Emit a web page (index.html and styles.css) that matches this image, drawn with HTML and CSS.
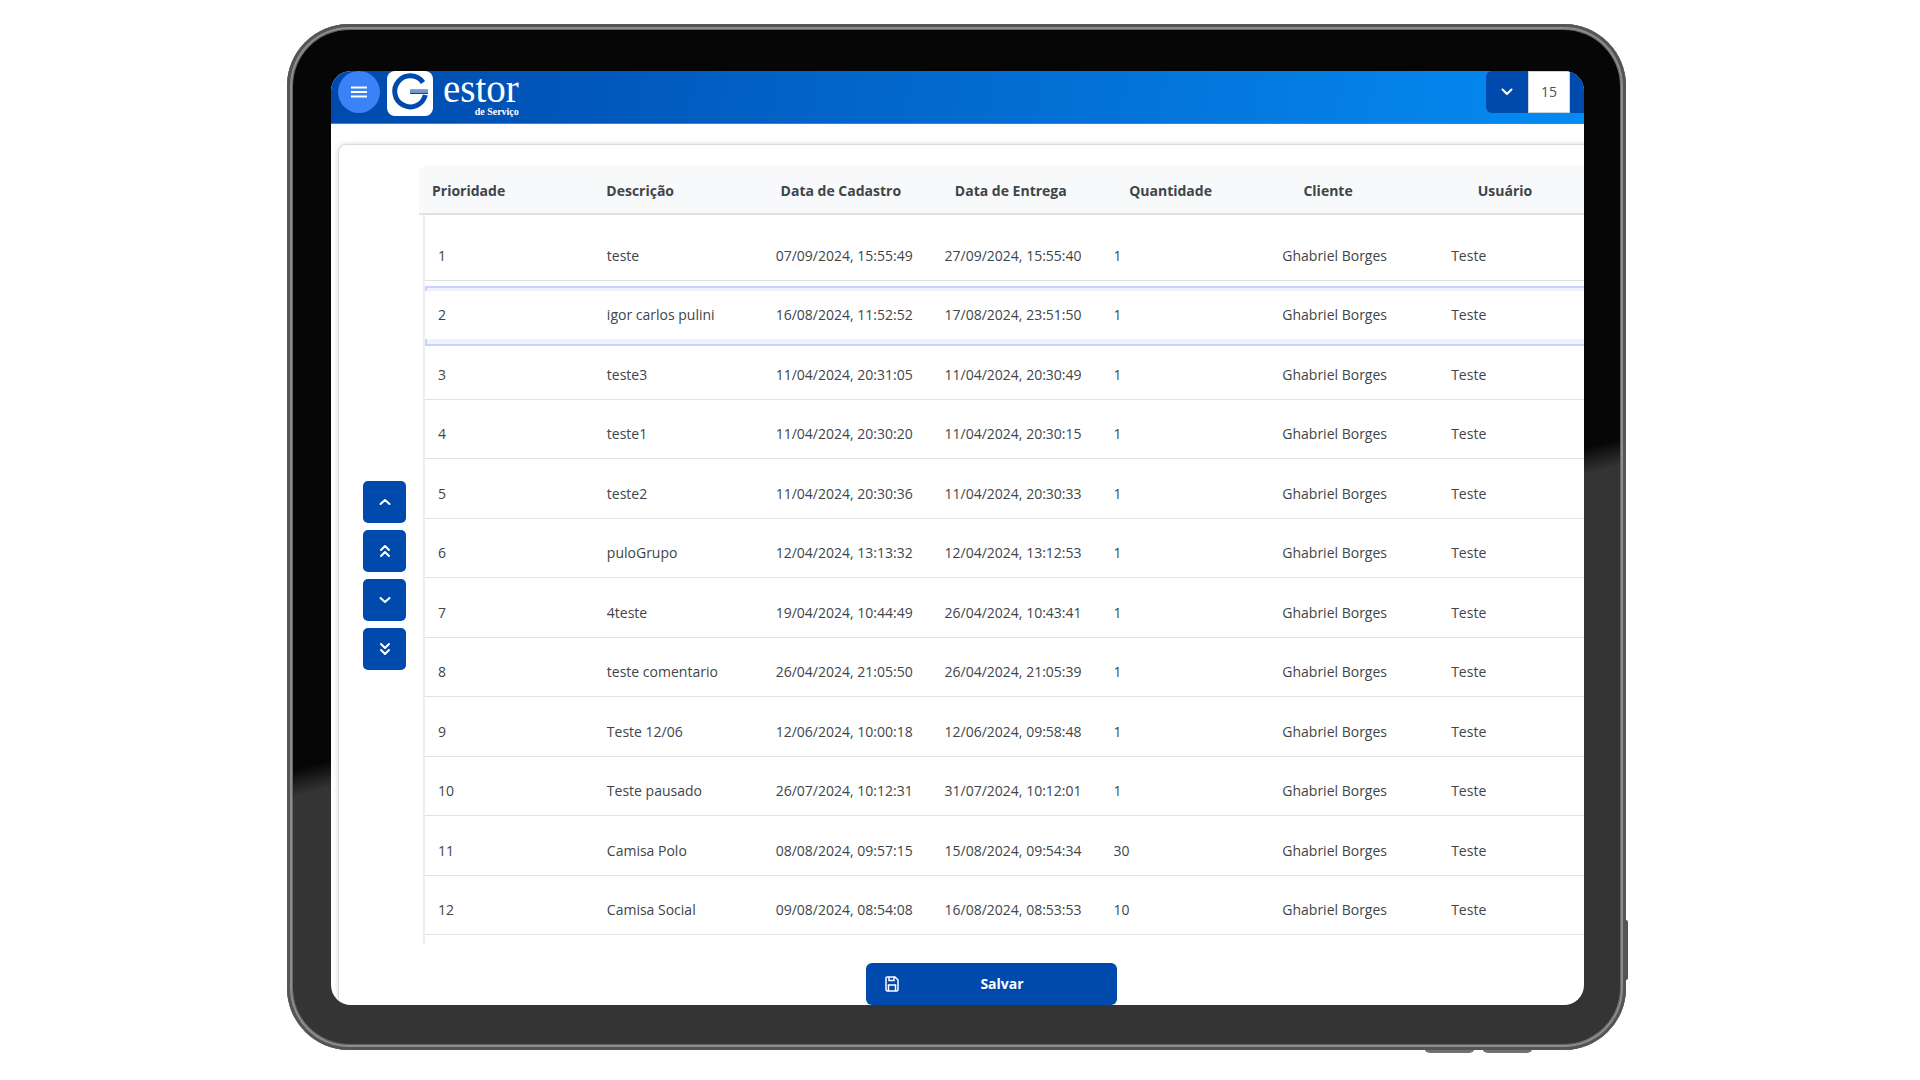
FILE: index.html
```html
<!DOCTYPE html>
<html lang="pt-BR">
<head>
<meta charset="utf-8">
<meta name="viewport" content="width=device-width, initial-scale=1">
<title>Gestor de Serviço</title>
<link rel="stylesheet" href="styles.css">
</head>
<body>
<div class="tablet">
  <span class="key key-side"></span>
  <span class="key key-bottom-a"></span>
  <span class="key key-bottom-b"></span>
  <div class="bezel">
    <div class="screen">
      <header class="topbar">
        <button class="menu" type="button" aria-label="Menu">
          <svg width="16" height="12" viewBox="0 0 16 12"><path d="M0 1.500h16M0 6h16M0 10.500h16" stroke="#fff" stroke-width="1.800"/></svg>
        </button>
        <a class="brand" href="#">
          <span class="mark">
            <svg width="46" height="45" viewBox="0 0 46 45" fill="none"><path d="M36 11.500A15.500 15.500 0 1 0 38.300 24" stroke="#004aad" stroke-width="5"/><path d="M23 19h18M23 22.500h18" stroke="#004aad" stroke-width="1"/><path d="M23 20.800h18" stroke="#6d97d0" stroke-width="2.500"/></svg>
          </span>
          <span class="wordmark">
            <span class="name">estor</span>
            <span class="tagline">de Serviço</span>
          </span>
        </a>
        <div class="stepper">
          <button class="step step-down" type="button" aria-label="Diminuir">
            <svg width="12" height="8" viewBox="0 0 12 8" fill="none"><path d="M1.500 1.500 6 6l4.500-4.500" stroke="#fff" stroke-width="2" stroke-linecap="round" stroke-linejoin="round"/></svg>
          </button>
          <input class="count" type="text" value="15" aria-label="Quantidade de itens">
          <button class="step" type="button" aria-label="Aumentar"></button>
        </div>
      </header>
      <main class="card">
        <div class="order">
          <div class="moves">
            <button class="move" type="button" aria-label="Subir"><svg width="12" height="8" viewBox="0 0 12 8" fill="none"><path d="M1.500 6 6 2l4.500 4"/></svg></button>
            <button class="move" type="button" aria-label="Mover para o topo"><svg width="12" height="14" viewBox="0 0 12 14" fill="none"><path d="M2 6l4-4 4 4M2 12l4-4 4 4"/></svg></button>
            <button class="move" type="button" aria-label="Descer"><svg width="12" height="8" viewBox="0 0 12 8" fill="none"><path d="M1.500 2 6 6l4.500-4"/></svg></button>
            <button class="move" type="button" aria-label="Mover para o fim"><svg width="12" height="14" viewBox="0 0 12 14" fill="none"><path d="M2 2l4 4 4-4M2 8l4 4 4-4"/></svg></button>
          </div>
          <table class="jobs">
            <thead>
              <tr><th>Prioridade</th><th>Descrição</th><th>Data de Cadastro</th><th>Data de Entrega</th><th>Quantidade</th><th>Cliente</th><th>Usuário</th></tr>
            </thead>
            <tbody>
              <tr><td>1</td><td>teste</td><td>07/09/2024, 15:55:49</td><td>27/09/2024, 15:55:40</td><td>1</td><td>Ghabriel Borges</td><td>Teste</td></tr>
              <tr class="focused"><td>2</td><td>igor carlos pulini</td><td>16/08/2024, 11:52:52</td><td>17/08/2024, 23:51:50</td><td>1</td><td>Ghabriel Borges</td><td>Teste</td></tr>
              <tr><td>3</td><td>teste3</td><td>11/04/2024, 20:31:05</td><td>11/04/2024, 20:30:49</td><td>1</td><td>Ghabriel Borges</td><td>Teste</td></tr>
              <tr><td>4</td><td>teste1</td><td>11/04/2024, 20:30:20</td><td>11/04/2024, 20:30:15</td><td>1</td><td>Ghabriel Borges</td><td>Teste</td></tr>
              <tr><td>5</td><td>teste2</td><td>11/04/2024, 20:30:36</td><td>11/04/2024, 20:30:33</td><td>1</td><td>Ghabriel Borges</td><td>Teste</td></tr>
              <tr><td>6</td><td>puloGrupo</td><td>12/04/2024, 13:13:32</td><td>12/04/2024, 13:12:53</td><td>1</td><td>Ghabriel Borges</td><td>Teste</td></tr>
              <tr><td>7</td><td>4teste</td><td>19/04/2024, 10:44:49</td><td>26/04/2024, 10:43:41</td><td>1</td><td>Ghabriel Borges</td><td>Teste</td></tr>
              <tr><td>8</td><td>teste comentario</td><td>26/04/2024, 21:05:50</td><td>26/04/2024, 21:05:39</td><td>1</td><td>Ghabriel Borges</td><td>Teste</td></tr>
              <tr><td>9</td><td>Teste 12/06</td><td>12/06/2024, 10:00:18</td><td>12/06/2024, 09:58:48</td><td>1</td><td>Ghabriel Borges</td><td>Teste</td></tr>
              <tr><td>10</td><td>Teste pausado</td><td>26/07/2024, 10:12:31</td><td>31/07/2024, 10:12:01</td><td>1</td><td>Ghabriel Borges</td><td>Teste</td></tr>
              <tr><td>11</td><td>Camisa Polo</td><td>08/08/2024, 09:57:15</td><td>15/08/2024, 09:54:34</td><td>30</td><td>Ghabriel Borges</td><td>Teste</td></tr>
              <tr><td>12</td><td>Camisa Social</td><td>09/08/2024, 08:54:08</td><td>16/08/2024, 08:53:53</td><td>10</td><td>Ghabriel Borges</td><td>Teste</td></tr>
            </tbody>
          </table>
        </div>
        <button class="save" type="button">
          <svg width="14" height="16" viewBox="0 0 14 16" fill="none" stroke="#fff" stroke-width="1.500"><path d="M2 1h8l3 3v9.500a1.500 1.500 0 0 1-1.500 1.500h-9A1.500 1.500 0 0 1 1 13.500V2a1 1 0 0 1 1-1zM4 1v3.500h5V1M3.500 15V9h7v6"/></svg>
          <span class="save-label">Salvar</span>
        </button>
      </main>
    </div>
  </div>
</div>
</body>
</html>
```
FILE: styles.css
```css
*, *::before, *::after { box-sizing: border-box; }

:root {
  --blue: #004aad;
  --text: #495057;
  --line: #dfe3e8;
}

body {
  margin: 0;
  padding: 24px 294px 30px 287px;
  background: #fff;
  color: #404549;
  font-family: "Open Sans", "Noto Sans", sans-serif;
  font-size: 14px;
  line-height: 20px;
}

button { border: 0; padding: 0; font: inherit; cursor: pointer; }
svg { display: block; }

/* Device */
.tablet {
  position: relative;
  padding: 6px;
  border-radius: 62px;
  background: #8a8a8a;
  box-shadow: inset 0 0 0 3px #555, inset 0 0 0 5px #8c8c8c, inset 0 0 0 6px #666;
}
.bezel {
  padding: 41px 36px 39px 38px;
  border-radius: 56px;
  background: linear-gradient(166deg, #060606 55%, #343434 57%);
}
.key { position: absolute; background: #555; z-index: -1; }
.key-side { right: -2px; top: 896px; width: 4px; height: 60px; border-radius: 2px; }
.key-bottom-a, .key-bottom-b { bottom: -3px; width: 51px; height: 6px; border-radius: 0 0 6px 6px; background: #707070; }
.key-bottom-a { right: 151px; }
.key-bottom-b { right: 93px; }

.screen { overflow: hidden; border-radius: 20px; background: #fff; }

/* Top bar */
.topbar {
  display: flex;
  height: 53px;
  padding-left: 7px;
  background: linear-gradient(100deg, #004aad, #058bf2);
  border-bottom: 1px solid #2f86dd;
}
.menu {
  display: grid;
  place-items: center;
  width: 42px;
  height: 42px;
  border-radius: 50%;
  background: #3b82f6;
}
.brand { display: flex; gap: 10px; margin-left: 7px; color: #fff; text-decoration: none; }
.mark { width: 46px; height: 45px; border-radius: 8px; background: #fff; overflow: hidden; }
.wordmark { display: flex; flex-direction: column; font-family: "Liberation Serif", serif; }
.name { font-size: 39px; line-height: 35px; }
.tagline { align-self: flex-end; font-size: 10px; line-height: 11px; font-weight: 700; }

.stepper { display: flex; height: 42px; margin: 0 -28px 0 auto; }
.step { display: grid; place-items: center; width: 42px; background: var(--blue); }
.step-down { border-radius: 6px 0 0 6px; }
.count {
  width: 42px;
  padding: 0;
  border: 1px solid #ced4da;
  color: var(--text);
  background: #fff;
  font: inherit;
  text-align: center;
}

/* Card */
.card {
  margin: 20px -60px 0 7px;
  padding-top: 21px;
  border: 1px solid #dcdcdc;
  border-bottom: 0;
  border-radius: 8px 8px 0 0;
  box-shadow: 0 0 5px rgba(0, 0, 0, .15);
}
.order { display: flex; gap: 13px; padding: 0 4px 0 24px; }
.moves {
  display: flex;
  flex-direction: column;
  justify-content: center;
  gap: 7px;
  padding-top: 40px;
}
.move {
  display: grid;
  place-items: center;
  width: 43px;
  height: 42px;
  border-radius: 5px;
  background: var(--blue);
}
.move path { stroke: #fff; stroke-width: 2; stroke-linecap: round; stroke-linejoin: round; }

.jobs { display: block; flex: 1; }
.jobs thead, .jobs tbody { display: block; }
.jobs tr { display: grid; grid-template-columns: repeat(7, 1fr); }
.jobs thead {
  border-bottom: 2px solid var(--line);
  border-radius: 6px 0 0 0;
  background: #f8f9fa;
}
.jobs th { padding: 15px 0 12px 13px; text-align: left; font-weight: 700; }
.jobs tbody {
  margin: 0 32px 0 4px;
  padding: 6px 0 9px;
  border-left: 2px solid #eceef0;
}
.jobs tbody tr { position: relative; height: 60px; border-bottom: 1px solid var(--line); }
.jobs tbody tr:nth-child(even) { height: 59px; }
.jobs td { padding: 25px 0 0 13px; white-space: nowrap; }
.jobs tbody tr:nth-child(even) td { padding-top: 24px; }
.focused::before, .focused::after {
  content: "";
  position: absolute;
  left: 0;
  right: 0;
  border-left: 2px solid #c7d2fe;
  background: #eef2ff;
}
.focused::before { top: 5px; height: 5px; border-top: 2px solid #c7d2fe; }
.focused::after { bottom: -7px; height: 7px; border-bottom: 2px solid #c7d2fe; }

.save {
  display: flex;
  align-items: center;
  width: 251px;
  height: 42px;
  margin: 19px auto 0;
  padding: 0 11px 0 19px;
  border-radius: 6px;
  background: var(--blue);
  color: #fff;
  font-weight: 700;
}
.save-label { flex: 1; }
```
